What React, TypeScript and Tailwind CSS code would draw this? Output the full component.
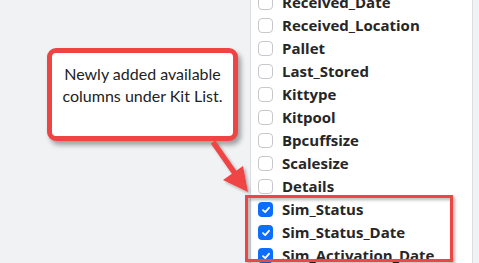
import React from "react";

const items: { label: string; checked: boolean }[] = [
  { label: "Received_Date", checked: false },
  { label: "Received_Location", checked: false },
  { label: "Pallet", checked: false },
  { label: "Last_Stored", checked: false },
  { label: "Kittype", checked: false },
  { label: "Kitpool", checked: false },
  { label: "Bpcuffsize", checked: false },
  { label: "Scalesize", checked: false },
  { label: "Details", checked: false },
  { label: "Sim_Status", checked: true },
  { label: "Sim_Status_Date", checked: true },
  { label: "Sim_Activation_Date", checked: true },
];

function Box({ checked }: { checked: boolean }) {
  if (checked) {
    return (
      <span className="flex h-[15px] w-[15px] shrink-0 items-center justify-center rounded-[4px] bg-[#0d6efd]">
        <svg width="10" height="10" viewBox="0 0 10 10">
          <path d="M2 5.2 L4.2 7.2 L8 2.8" fill="none" stroke="white" strokeWidth="1.8" strokeLinecap="round" strokeLinejoin="round" />
        </svg>
      </span>
    );
  }
  return <span className="h-[15px] w-[15px] shrink-0 rounded-[4px] border border-[#c6c8cc] bg-white" />;
}

export default function App() {
  return (
    <div className="relative flex h-[263px] w-[479px] overflow-hidden bg-[#f1f2f4]">
      <div className="w-[250px] shrink-0" />
      <div className="w-[223px] shrink-0 border-x border-[#dcdde0] bg-white pl-[7px]">
        <div className="mt-[-9px] flex flex-col">
          {items.map((it) => (
            <div key={it.label} className="flex h-[23px] items-center gap-[9px]">
              <Box checked={it.checked} />
              <span
                className="text-[15px] font-bold leading-none text-[#262626]"
                style={{ fontFamily: '"Open Sans", "Noto Sans", sans-serif' }}
              >
                {it.label}
              </span>
            </div>
          ))}
        </div>
      </div>

      {/* callout */}
      <div
        className="absolute left-[47px] top-[48px] flex h-[93px] w-[191px] flex-col items-center rounded-[9px] border-[5px] border-[#ef4444] bg-white pt-[10px] text-center text-[16px] leading-[22px] text-[#222] shadow-[3px_4px_5px_rgba(0,0,0,0.35)]"
        style={{ fontFamily: 'Lato, "Open Sans", sans-serif' }}
      >
        <span>Newly added available</span>
        <span>columns under Kit List.</span>
      </div>

      {/* arrow + highlight box */}
      <svg className="pointer-events-none absolute left-0 top-0" width="479" height="263" viewBox="0 0 479 263">
        <defs>
          <filter id="sh" x="-20%" y="-20%" width="140%" height="140%">
            <feDropShadow dx="2" dy="2" stdDeviation="1.5" floodColor="#000" floodOpacity="0.3" />
          </filter>
        </defs>
        <g filter="url(#sh)">
          <line x1="213" y1="142" x2="236" y2="175" stroke="#ef4444" strokeWidth="5.5" />
          <polygon points="248,192 223,180 243,166" fill="#ef4444" />
          <rect x="246.5" y="196.5" width="205" height="64" fill="none" stroke="#ef4444" strokeWidth="3" />
        </g>
      </svg>
    </div>
  );
}
